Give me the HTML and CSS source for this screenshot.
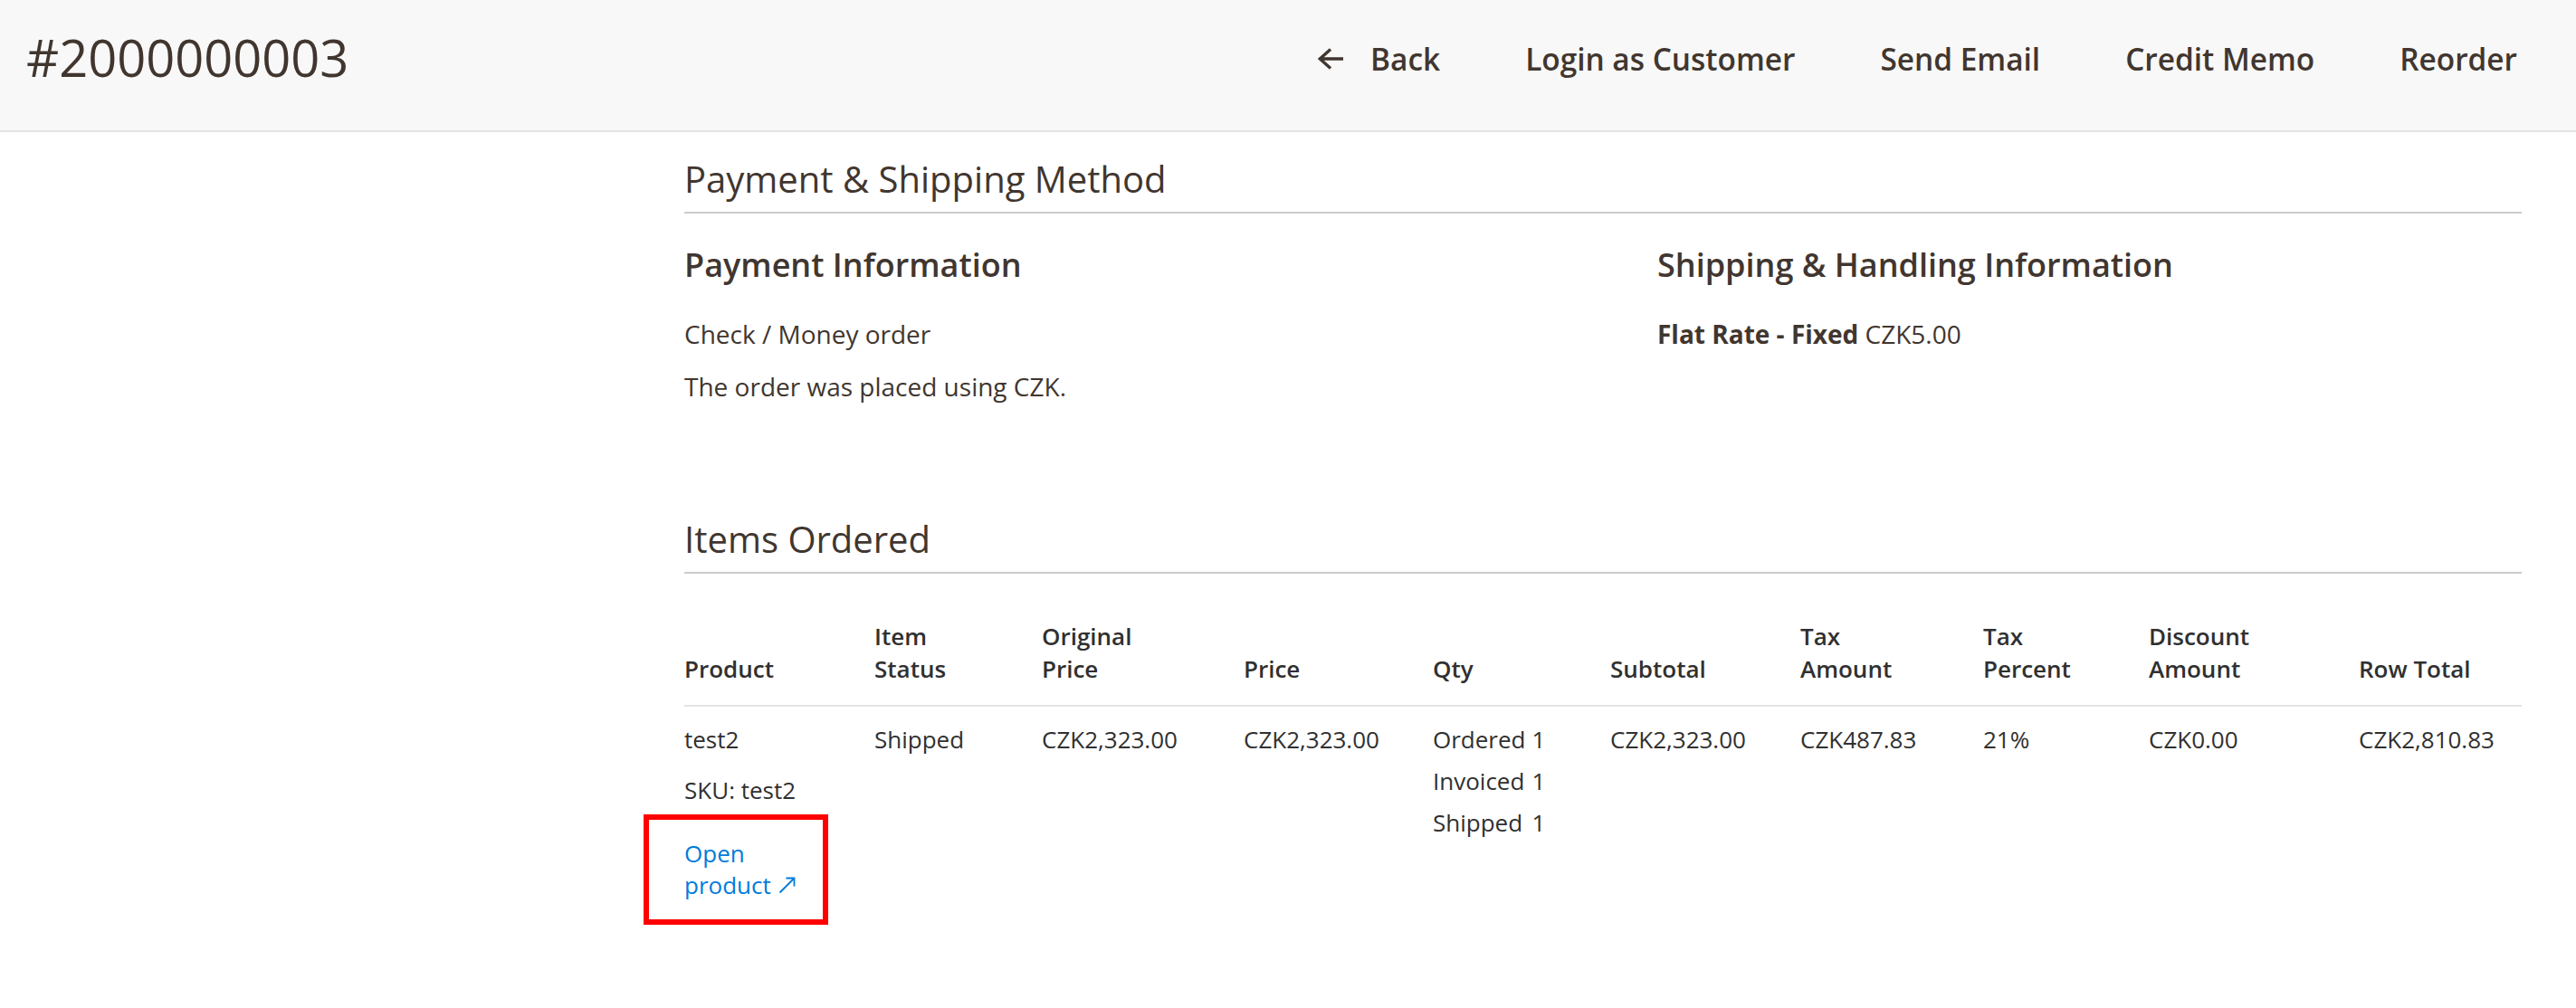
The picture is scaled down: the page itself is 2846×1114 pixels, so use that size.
FILE: index.html
```html
<!DOCTYPE html>
<html lang="en">
<head>
<meta charset="utf-8">
<title>#2000000003</title>
<link rel="stylesheet" href="styles.css">
</head>
<body>
<header class="page-header">
  <h1 class="page-title">#2000000003</h1>
  <nav class="page-actions">
    <button class="action action-back">
      <svg class="back-icon" width="28" height="24" viewBox="0 0 28 24" aria-hidden="true">
        <path d="M14 1.5 L2.2 12 L14 22.5 M2.2 12 H28" fill="none" stroke="#41362f" stroke-width="3.4" stroke-linejoin="miter"/>
      </svg>
      <span>Back</span>
    </button>
    <button class="action">Login as Customer</button>
    <button class="action">Send Email</button>
    <button class="action">Credit Memo</button>
    <button class="action">Reorder</button>
  </nav>
</header>

<main class="page-content">
  <section class="section section-payment">
    <h2 class="section-title">Payment &amp; Shipping Method</h2>
    <div class="section-columns">
      <div class="section-item">
        <h3 class="item-title">Payment Information</h3>
        <p class="item-text">Check / Money order</p>
        <p class="item-text item-text-next">The order was placed using CZK.</p>
      </div>
      <div class="section-item">
        <h3 class="item-title">Shipping &amp; Handling Information</h3>
        <p class="item-text"><strong>Flat Rate - Fixed</strong> CZK5.00</p>
      </div>
    </div>
  </section>

  <section class="section section-items">
    <h2 class="section-title">Items Ordered</h2>
    <table class="items-table">
      <colgroup>
        <col class="col-product">
        <col class="col-status">
        <col class="col-original">
        <col class="col-price">
        <col class="col-qty">
        <col class="col-subtotal">
        <col class="col-tax">
        <col class="col-taxpct">
        <col class="col-discount">
        <col class="col-total">
      </colgroup>
      <thead>
        <tr>
          <th>Product</th>
          <th>Item<br>Status</th>
          <th>Original<br>Price</th>
          <th>Price</th>
          <th>Qty</th>
          <th>Subtotal</th>
          <th>Tax<br>Amount</th>
          <th>Tax<br>Percent</th>
          <th>Discount<br>Amount</th>
          <th>Row Total</th>
        </tr>
      </thead>
      <tbody>
        <tr>
          <td>
            <div class="product-name">test2</div>
            <div class="product-sku">SKU: test2</div>
            <div class="product-link-wrap">
              <a class="product-link" href="#">Open product<span class="ext-icon"><svg width="20" height="20" viewBox="0 0 20 20" aria-hidden="true"><path d="M1.5 18.5 L17.5 2.5 M8.5 2.5 H17.5 V11.5" fill="none" stroke="#007bdb" stroke-width="1.8"/></svg></span></a>
            </div>
          </td>
          <td>Shipped</td>
          <td>CZK2,323.00</td>
          <td>CZK2,323.00</td>
          <td>
            <div class="qty-grid">
              <span>Ordered</span><span>1</span>
              <span>Invoiced</span><span>1</span>
              <span>Shipped</span><span>1</span>
            </div>
          </td>
          <td>CZK2,323.00</td>
          <td>CZK487.83</td>
          <td>21%</td>
          <td>CZK0.00</td>
          <td>CZK2,810.83</td>
        </tr>
      </tbody>
    </table>
  </section>
</main>
</body>
</html>
```
FILE: styles.css
```css
* {
  box-sizing: border-box;
}

html, body {
  margin: 0;
  padding: 0;
  background: #ffffff;
}

body {
  font-family: "Open Sans", "Liberation Sans", sans-serif;
  color: #41362f;
  font-size: 28px;
  line-height: 36px;
}

/* Header */
.page-header {
  height: 146px;
  background: #f8f8f8;
  border-bottom: 2px solid #e3e3e3;
  display: flex;
  justify-content: space-between;
  align-items: flex-start;
  padding: 0 65px 0 29px;
}

.page-title {
  margin: 29px 0 0;
  font-size: 56px;
  line-height: 68px;
  font-weight: 400;
  color: #41362f;
}

.page-actions {
  display: flex;
  gap: 94px;
  margin-top: 45px;
}

.action {
  font-family: "Open Sans", "Liberation Sans", sans-serif;
  font-size: 33.4px;
  line-height: 40px;
  font-weight: 600;
  color: #41362f;
  background: none;
  border: 0;
  padding: 0;
  margin: 0;
  cursor: pointer;
}

.action-back {
  display: flex;
  align-items: center;
  gap: 30px;
}

.back-icon {
  display: block;
}

/* Content */
.page-content {
  padding: 0 60px 60px 756px;
}

.section-title {
  margin: 0;
  font-size: 40px;
  line-height: 48px;
  font-weight: 400;
  color: #41362f;
  padding-bottom: 12px;
  border-bottom: 2px solid #cccccc;
}

.section-payment .section-title {
  margin-top: 28px;
}

.section-items .section-title {
  margin-top: 127px;
}

.section-columns {
  display: grid;
  grid-template-columns: 1fr 1fr;
  column-gap: 120px;
}

.item-title {
  margin: 35px 0 0;
  font-size: 36px;
  line-height: 44px;
  font-weight: 600;
  color: #41362f;
}

.item-text {
  margin: 36px 0 0;
  font-size: 28px;
  line-height: 36px;
  color: #41362f;
}

.item-text-next {
  margin-top: 22px;
}

.item-text strong {
  font-weight: 700;
}

/* Table */
.items-table {
  width: 100%;
  table-layout: fixed;
  border-collapse: collapse;
  color: #303030;
}

.col-product { width: 210px; }
.col-status { width: 185px; }
.col-original { width: 223px; }
.col-price { width: 209px; }
.col-qty { width: 196px; }
.col-subtotal { width: 210px; }
.col-tax { width: 202px; }
.col-taxpct { width: 183px; }
.col-discount { width: 232px; }
.col-total { width: 180px; }

.items-table th {
  text-align: left;
  vertical-align: bottom;
  font-size: 26px;
  line-height: 36px;
  font-weight: 600;
  padding: 51px 40px 22px 0;
  border-bottom: 2px solid #e3e3e3;
  white-space: nowrap;
}

.items-table td {
  text-align: left;
  vertical-align: top;
  font-size: 26px;
  line-height: 36px;
  font-weight: 400;
  padding: 18px 40px 20px 0;
  white-space: nowrap;
}

.items-table th:last-child,
.items-table td:last-child {
  padding-right: 0;
}

.product-sku {
  margin-top: 20px;
}

.product-link-wrap {
  position: relative;
  margin-top: 35px;
  width: 150px;
  white-space: normal;
  line-height: 35px;
}

.product-link {
  color: #007bdb;
  text-decoration: none;
}

.ext-icon {
  display: inline-block;
  margin-left: 8px;
  vertical-align: 0;
}

.ext-icon svg {
  display: block;
}

.product-link-wrap::after {
  content: "";
  position: absolute;
  left: -45px;
  right: -9px;
  top: -26px;
  bottom: -26px;
  border: 6px solid #ff0000;
  pointer-events: none;
}

.qty-grid {
  display: grid;
  grid-template-columns: auto auto;
  justify-content: start;
  column-gap: 7px;
  row-gap: 10px;
}
```
